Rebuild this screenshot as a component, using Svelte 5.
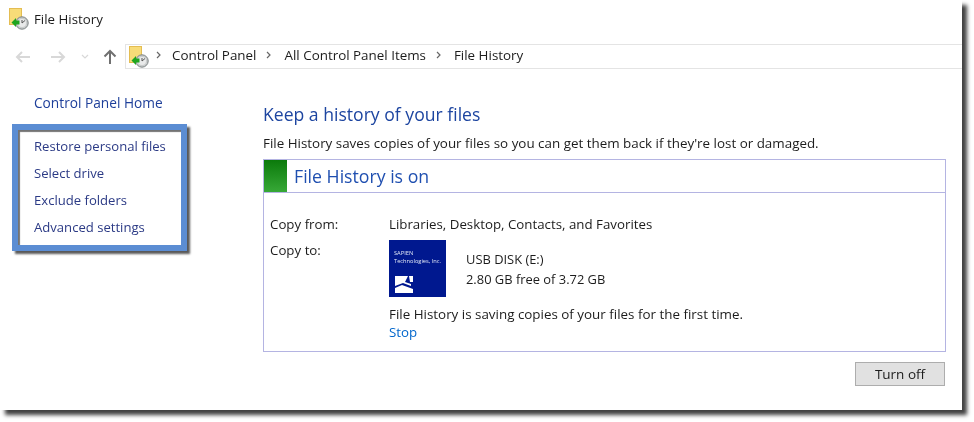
<script lang="ts">
	const sideLinks = ['Restore personal files', 'Select drive', 'Exclude folders', 'Advanced settings'];
	const crumbs = ['Control Panel', 'All Control Panel Items', 'File History'];
</script>

{#snippet historyIcon()}
	<svg class="history-icon" width="22" height="22" viewBox="0 0 22 22">
		<rect x="0.5" y="0.5" width="12" height="16" fill="#f8dc78" stroke="#e4bd52" />
		<circle cx="13" cy="15" r="6.2" fill="#c9cccc" stroke="#7d8484" />
		<circle cx="13" cy="15" r="4" fill="#e9eaea" />
		<path d="M13 15 L16 12.5 M13 15 L13 12" stroke="#555" fill="none" />
		<path d="M2.5 14.5 L7 10 V12.5 H10.5 V16.5 H7 V19 Z" fill="#1fa51f" />
	</svg>
{/snippet}

<div class="page">
	<div class="window">
		<div class="title">
			{@render historyIcon()}
			<span>File History</span>
		</div>

		<div class="nav">
			<div class="nav-buttons">
				<svg width="16" height="14" viewBox="0 0 16 14"><path d="M15 7H2M7 2 2 7l5 5" fill="none" stroke="#d8d8d8" stroke-width="2" /></svg>
				<svg width="16" height="14" viewBox="0 0 16 14"><path d="M1 7h13M9 2l5 5-5 5" fill="none" stroke="#d8d8d8" stroke-width="2" /></svg>
				<svg width="8" height="6" viewBox="0 0 8 6"><path d="M1 1l3 3 3-3" fill="none" stroke="#d8d8d8" stroke-width="1.2" /></svg>
				<svg width="14" height="15" viewBox="0 0 14 15"><path d="M7 15V2M1.5 7.5 7 2l5.5 5.5" fill="none" stroke="#707070" stroke-width="2" /></svg>
			</div>
			<div class="address">
				{@render historyIcon()}
				{#each crumbs as crumb, i}
					<svg class="chevron" class:first={i === 0} width="6" height="8" viewBox="0 0 6 8"><path d="M1 1l3 3-3 3" fill="none" stroke="#666" stroke-width="1.2" /></svg>
					<span>{crumb}</span>
				{/each}
			</div>
		</div>

		<div class="content">
			<aside>
				<a class="home" href="#home">Control Panel Home</a>
				<div class="highlight">
					{#each sideLinks as link}
						<a href="#side">{link}</a>
					{/each}
				</div>
			</aside>

			<main>
				<h1>Keep a history of your files</h1>
				<p class="intro">File History saves copies of your files so you can get them back if they're lost or damaged.</p>

				<section class="panel">
					<header>
						<div class="swatch"></div>
						<h2>File History is on</h2>
					</header>
					<div class="details">
						<div class="row from">
							<span class="label">Copy from:</span>
							<span>Libraries, Desktop, Contacts, and Favorites</span>
						</div>
						<div class="row to">
							<span class="label">Copy to:</span>
							<div class="target">
								<div class="drive">
									<div class="tile">
										<span class="tile-text">SAPIEN<br />Technologies, Inc.</span>
										<svg width="20" height="19" viewBox="0 0 20 19">
											<path d="M1 1h13l-3 6 6 2v2L9 8 1 11zM1 13l7-3 11 4v4H1z" fill="#fff" />
											<path d="M15 1h4v6h-3z" fill="#fff" />
										</svg>
									</div>
									<div class="drive-text">
										<span>USB DISK (E:)</span>
										<span>2.80 GB free of 3.72 GB</span>
									</div>
								</div>
								<p class="status">File History is saving copies of your files for the first time.</p>
								<a class="stop" href="#stop">Stop</a>
							</div>
						</div>
					</div>
				</section>

				<div class="actions">
					<button type="button">Turn off</button>
				</div>
			</main>
		</div>
	</div>
</div>

<style>
	:global(body) {
		background: #fff;
	}

	.page {
		height: 422px;
		overflow: hidden;
	}

	.window {
		display: flex;
		flex-direction: column;
		box-sizing: border-box;
		width: 962px;
		height: 410px;
		background: #fff;
		box-shadow: 5px 5px 4px rgba(0, 0, 0, 0.75);
		font-family: 'Open Sans', 'Liberation Sans', sans-serif;
		font-size: 13.3px;
		color: #1c1c1c;
		filter: blur(0.3px);
	}

	.title {
		display: flex;
		align-items: center;
		gap: 3px;
		height: 44px;
		padding: 0 0 6px 9px;
		box-sizing: border-box;
	}

	.history-icon {
		flex: none;
	}

	.nav {
		display: flex;
		height: 25px;
	}

	.nav-buttons {
		display: flex;
		align-items: center;
		width: 125px;
		box-sizing: border-box;
		padding: 0 0 0 15px;
	}

	.nav-buttons svg:nth-child(2) {
		margin-left: 19px;
	}

	.nav-buttons svg:nth-child(3) {
		margin-left: 15px;
	}

	.nav-buttons svg:nth-child(4) {
		margin-left: 14px;
	}

	.address {
		flex: 1;
		display: flex;
		align-items: center;
		box-sizing: border-box;
		border: 1px solid #e4e4e4;
		border-right: none;
		padding: 0 0 3px 3px;
		font-size: 13.4px;
	}

	.address .history-icon {
		margin-top: 3px;
	}

	.chevron {
		margin: 0 12px 0 10px;
	}

	.chevron.first {
		margin: 0 10px 0 5px;
	}

	.content {
		flex: 1;
		display: flex;
	}

	aside {
		display: flex;
		flex-direction: column;
		width: 263px;
		flex: none;
		padding: 25px 0 0 12px;
		box-sizing: border-box;
	}

	a {
		color: #1e3f8f;
		text-decoration: none;
	}

	.home {
		padding-left: 22px;
		font-size: 13.7px;
		line-height: 18px;
		color: #1e3f9a;
	}

	.highlight {
		display: flex;
		flex-direction: column;
		box-sizing: border-box;
		width: 175px;
		height: 127px;
		margin-top: 12px;
		padding: 2.5px 0 0 16px;
		border: 6px solid #5b8dd3;
		box-shadow: 3px 3px 2px rgba(0, 0, 0, 0.65), inset 2px 2px 1px rgba(0, 0, 0, 0.55);
		background: #fff;
		font-size: 13.1px;
		line-height: 27px;
	}

	.highlight a {
		color: #2b3a85;
	}

	main {
		flex: 1;
		padding: 33px 16px 0 0;
		min-width: 0;
	}

	h1 {
		margin: 0;
		font-size: 17.6px;
		font-weight: 400;
		line-height: 24px;
		color: #1d45a0;
	}

	.intro {
		margin: 8px 0 0;
		font-size: 13.4px;
		line-height: 18px;
	}

	.panel {
		margin-top: 7px;
		height: 193px;
		box-sizing: border-box;
		border: 1px solid #b4b4e2;
	}

	header {
		display: flex;
		align-items: center;
		gap: 7px;
		height: 32px;
		border-bottom: 1px solid #b4b4e2;
	}

	.swatch {
		width: 23px;
		height: 100%;
		background: linear-gradient(#0b7a0b, #37a837);
	}

	h2 {
		margin: 0;
		font-size: 17.7px;
		font-weight: 400;
		color: #1f4fb0;
	}

	.details {
		padding: 22px 0 0 6px;
	}

	.row {
		display: flex;
		line-height: 18px;
	}

	.to {
		margin-top: 8px;
	}

	.label {
		width: 119px;
		flex: none;
	}

	.drive {
		display: flex;
		gap: 20px;
		font-size: 12.9px;
	}

	.tile {
		display: flex;
		flex-direction: column;
		justify-content: space-between;
		box-sizing: border-box;
		width: 57px;
		height: 57px;
		margin-top: -1px;
		padding: 9px 3px 3px 5px;
		background: #00188f;
		color: #dfe6f5;
		font-size: 5.7px;
		line-height: 8px;
	}

	.drive-text {
		display: flex;
		flex-direction: column;
		gap: 2px;
		padding-top: 9px;
	}

	.status {
		margin: 8px 0 0;
		font-size: 13.4px;
	}

	.stop {
		display: block;
		color: #0066cc;
		line-height: 18px;
	}

	.actions {
		display: flex;
		justify-content: flex-end;
		margin-top: 10px;
	}

	button {
		width: 90px;
		height: 24px;
		margin-right: 1px;
		padding: 0;
		border: 1px solid #adadad;
		background: #e1e1e1;
		font: inherit;
		font-size: 13.5px;
		color: #1c1c1c;
	}
</style>
